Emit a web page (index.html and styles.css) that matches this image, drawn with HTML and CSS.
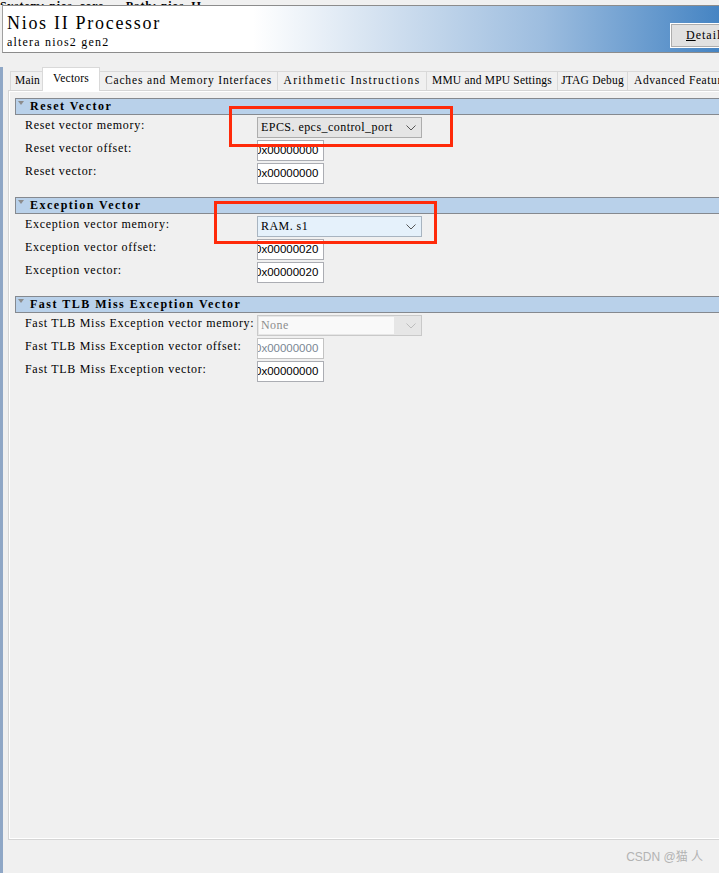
FILE: index.html
```html
<!DOCTYPE html>
<html lang="en">
<head>
    <meta charset="UTF-8">
    <title>Nios II Processor</title>
    <link rel="stylesheet" href="styles.css">
</head>
<body>
    <div class="sysbar">
        <span>System: nios_core</span>
        <span class="path">Path: nios_II</span>
    </div>

    <header class="head">
        <div class="head-text">
            <div class="title">Nios II Processor</div>
            <div class="subtitle">altera nios2 gen2</div>
        </div>
        <button class="detail-btn"><u>D</u>etail</button>
    </header>

    <div class="frame">
        <nav class="tabs">
            <div class="tab tab-main">Main</div>
            <div class="tab tab-vectors active">Vectors</div>
            <div class="tab tab-caches">Caches and Memory Interfaces</div>
            <div class="tab tab-arith">Arithmetic Instructions</div>
            <div class="tab tab-mmu">MMU and MPU Settings</div>
            <div class="tab tab-jtag">JTAG Debug</div>
            <div class="tab tab-adv">Advanced Features</div>
        </nav>

        <section class="panel">
            <div class="group">
                <div class="group-head"><span class="tri"></span>Reset Vector</div>
                <div class="row">
                    <span class="label">Reset vector memory:</span>
                    <div class="combo">
                        <span class="combo-text">EPCS. epcs_control_port</span>
                        <svg class="chev" width="10" height="6" viewBox="0 0 10 6"><polyline points="0.5,0.5 5,5 9.5,0.5" fill="none" stroke="#555" stroke-width="1"/></svg>
                    </div>
                </div>
                <div class="row">
                    <span class="label">Reset vector offset:</span>
                    <div class="field">0x00000000</div>
                </div>
                <div class="row">
                    <span class="label">Reset vector:</span>
                    <div class="field">0x00000000</div>
                </div>
            </div>

            <div class="group">
                <div class="group-head"><span class="tri"></span>Exception Vector</div>
                <div class="row">
                    <span class="label">Exception vector memory:</span>
                    <div class="combo focus">
                        <span class="combo-text">RAM. s1</span>
                        <svg class="chev" width="10" height="6" viewBox="0 0 10 6"><polyline points="0.5,0.5 5,5 9.5,0.5" fill="none" stroke="#555" stroke-width="1"/></svg>
                    </div>
                </div>
                <div class="row">
                    <span class="label">Exception vector offset:</span>
                    <div class="field">0x00000020</div>
                </div>
                <div class="row">
                    <span class="label">Exception vector:</span>
                    <div class="field">0x00000020</div>
                </div>
            </div>

            <div class="group">
                <div class="group-head"><span class="tri"></span>Fast TLB Miss Exception Vector</div>
                <div class="row">
                    <span class="label">Fast TLB Miss Exception vector memory:</span>
                    <div class="combo disabled">
                        <span class="combo-text">None</span>
                        <svg class="chev" width="10" height="6" viewBox="0 0 10 6"><polyline points="0.5,0.5 5,5 9.5,0.5" fill="none" stroke="#bdbdbd" stroke-width="1"/></svg>
                    </div>
                </div>
                <div class="row">
                    <span class="label">Fast TLB Miss Exception vector offset:</span>
                    <div class="field disabled">0x00000000</div>
                </div>
                <div class="row">
                    <span class="label">Fast TLB Miss Exception vector:</span>
                    <div class="field">0x00000000</div>
                </div>
            </div>
        </section>

        <footer class="watermark">CSDN @猫 人</footer>
    </div>

    <!-- red annotation boxes drawn over the screenshot -->
    <div class="mark mark-reset"></div>
    <div class="mark mark-exc"></div>
</body>
</html>
```

FILE: styles.css
```css
html, body {
    margin: 0;
    padding: 0;
    width: 719px;
    height: 873px;
    overflow: hidden;
}

body {
    background: #f0f0f0;
    font-family: "Liberation Serif", "Times New Roman", serif;
    font-size: 12px;
    letter-spacing: 0.7px;
    color: #000;
    position: relative;
}

/* cut-off system line at the very top */
.sysbar {
    height: 5px;
    overflow: hidden;
    white-space: nowrap;
    font-weight: bold;
    line-height: 12px;
}

.sysbar span {
    display: inline-block;
    margin-top: -8px;
}

.sysbar .path {
    margin-left: 18px;
}

.head {
    box-sizing: border-box;
    height: 48px;
    margin-left: 2px;
    border-top: 1px solid #8c8c8c;
    border-bottom: 1px solid #8c8c8c;
    border-left: 1px solid #a0a0a0;
    background: linear-gradient(to right, #ffffff 0px, #ffffff 250px, #d6e3f1 370px, #9dbddf 540px, #4584c3 717px);
    display: flex;
    align-items: flex-start;
}

.head-text {
    flex: 1;
    padding: 6px 0 0 4px;
}

.title {
    font-size: 18px;
    letter-spacing: 1.7px;
    line-height: 22px;
}

.subtitle {
    margin-top: 2px;
    line-height: 13px;
    letter-spacing: 1.2px;
}

.detail-btn {
    box-sizing: border-box;
    width: 62px;
    height: 23px;
    margin: 18px -14px 0 0;
    padding: 0 0 0 14px;
    text-align: left;
    background: #e1e1e1;
    border: 1px solid #adadad;
    outline: 1px solid #ffffff;
    font-family: "Liberation Serif", serif;
    font-size: 12px;
    letter-spacing: 1px;
    color: #000;
}

.frame {
    border-left: 3px solid #8fa7c6;
    height: 820px;
}

.tabs {
    display: flex;
    align-items: flex-end;
    height: 23px;
    margin: 14px 0 0 7px;
    white-space: nowrap;
}

.tab {
    box-sizing: border-box;
    flex: none;
    height: 19px;
    line-height: 17px;
    text-align: center;
    margin-right: -1px;
    border: 1px solid #d9d9d9;
    border-bottom: none;
    background: #f0f0f0;
    font-size: 11.5px;
    letter-spacing: 0.2px;
}

.tab.active {
    height: 24px;
    line-height: 21px;
    margin: 0 -1px -1px -2px;
    background: #ffffff;
    position: relative;
    z-index: 1;
}

.tab-main { width: 35px; }
.tab-vectors { width: 58px; }
.tab-caches { width: 179px; letter-spacing: 0.85px; }
.tab-arith { width: 150px; letter-spacing: 1.3px; }
.tab-mmu { width: 132px; }
.tab-jtag { width: 71px; }
.tab-adv { width: 112px; text-align: left; padding-left: 6px; letter-spacing: 0.6px; }

.panel {
    box-sizing: border-box;
    width: 760px;
    height: 750px;
    margin-left: 5px;
    padding: 7px 0 0 6px;
    border: 1px solid #d5d5d5;
    box-shadow: inset 1px 1px 0 #ffffff, inset 0 -1px 0 #ffffff;
}

.group {
    margin-bottom: 13px;
}

.group-head {
    box-sizing: border-box;
    height: 17px;
    line-height: 15px;
    background: #b9d1ea;
    border: 1px solid #85898f;
    border-right: none;
    font-weight: bold;
    letter-spacing: 1.5px;
    display: flex;
    padding-left: 2px;
}

.tri {
    width: 0;
    height: 0;
    border-left: 3px solid transparent;
    border-right: 3px solid transparent;
    border-top: 4px solid #8c8c8c;
    margin: 2px 6px 0 0;
}

.row {
    display: flex;
    align-items: flex-start;
    height: 21px;
    margin-top: 2px;
    padding-left: 10px;
}

.label {
    width: 232px;
    padding-top: 1px;
    white-space: nowrap;
}

.combo {
    box-sizing: border-box;
    width: 165px;
    height: 21px;
    display: flex;
    align-items: center;
    justify-content: space-between;
    padding: 0 5px 0 3px;
    background: #e5e5e5;
    border: 1px solid #adadad;
}

.combo.focus {
    background: #e5f1fb;
    border-color: #a8b4c0;
}

.combo.disabled {
    background: #e6e6e6;
    border-color: #c9c9c9;
    padding-left: 1px;
}

.combo.disabled .combo-text {
    flex: 1;
    height: 17px;
    line-height: 17px;
    padding-left: 2px;
    margin-right: 12px;
    background: #f9f9f9;
    color: #8d8d8d;
}

.combo-text {
    white-space: nowrap;
    letter-spacing: 0.45px;
}

.field {
    box-sizing: border-box;
    width: 67px;
    height: 21px;
    line-height: 19px;
    overflow: hidden;
    white-space: nowrap;
    text-indent: -3px;
    background: #ffffff;
    border: 1px solid #abadb3;
    font-family: "Liberation Sans", Arial, sans-serif;
    font-size: 11.5px;
    letter-spacing: 0;
}

.field.disabled {
    border-color: #c3c3c3;
    color: #7b8794;
}

.watermark {
    height: 33px;
    line-height: 34px;
    text-align: right;
    padding-right: 16px;
    font-family: "Liberation Sans", "Noto Sans CJK SC", sans-serif;
    font-size: 12px;
    letter-spacing: 0;
    color: #b3b3b3;
}

.mark {
    position: absolute;
    box-sizing: border-box;
    border: 3px solid #ff2a0a;
}

.mark-reset {
    left: 229px;
    top: 106px;
    width: 224px;
    height: 41px;
}

.mark-exc {
    left: 214px;
    top: 201px;
    width: 223px;
    height: 43px;
}
```
